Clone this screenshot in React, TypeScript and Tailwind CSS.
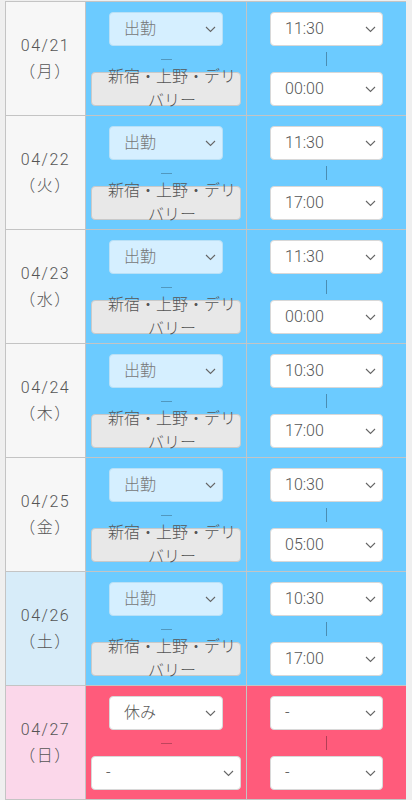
import React from 'react';

type Day = { date: string; dow: string; kind: 'week' | 'sat' | 'sun'; status: string; place: string; start: string; end: string };

const days: Day[] = [
  { date: '04/21', dow: '（月）', kind: 'week', status: '出勤', place: '新宿・上野・デリバリー', start: '11:30', end: '00:00' },
  { date: '04/22', dow: '（火）', kind: 'week', status: '出勤', place: '新宿・上野・デリバリー', start: '11:30', end: '17:00' },
  { date: '04/23', dow: '（水）', kind: 'week', status: '出勤', place: '新宿・上野・デリバリー', start: '11:30', end: '00:00' },
  { date: '04/24', dow: '（木）', kind: 'week', status: '出勤', place: '新宿・上野・デリバリー', start: '10:30', end: '17:00' },
  { date: '04/25', dow: '（金）', kind: 'week', status: '出勤', place: '新宿・上野・デリバリー', start: '10:30', end: '05:00' },
  { date: '04/26', dow: '（土）', kind: 'sat', status: '出勤', place: '新宿・上野・デリバリー', start: '10:30', end: '17:00' },
  { date: '04/27', dow: '（日）', kind: 'sun', status: '休み', place: '-', start: '-', end: '-' },
];

const Chevron = () => (
  <svg width="11" height="7" viewBox="0 0 11 7" className="shrink-0">
    <path d="M1 1 L5.5 5.5 L10 1" fill="none" stroke="#666" strokeWidth="1.1" />
  </svg>
);

const App: React.FC = () => {
  return (
    <div
      className="w-[412px] h-[800px] bg-[#efefef] pl-[5px] pr-[6px] pt-[1px] overflow-hidden font-light"
      style={{ fontFamily: 'Roboto, "Noto Sans CJK JP", sans-serif' }}
    >
      <div className="border-t border-l border-[#c4c4c4]">
        {days.map(d => {
          const off = d.kind === 'sun';
          const dateBg = d.kind === 'sat' ? 'bg-[#d7ecf9]' : d.kind === 'sun' ? 'bg-[#fbd7ea]' : 'bg-[#f7f7f7]';
          const cellBg = off ? 'bg-[#ff5b7b]' : 'bg-[#6ccbff]';
          return (
            <div key={d.date} className="flex h-[114px] border-b border-[#c4c4c4]">
              {/* date */}
              <div className={`w-[80px] shrink-0 border-r border-[#c4c4c4] flex flex-col items-center justify-center text-[16px] leading-[26px] tracking-[1.5px] text-[#555] ${dateBg}`}>
                <span>{d.date}</span>
                <span>{d.dow}</span>
              </div>

              {/* status / place */}
              <div className={`w-[161px] shrink-0 border-r border-[#c4c4c4] flex flex-col items-center pt-[10px] ${cellBg}`}>
                <div
                  className={`w-[114px] h-[34px] rounded-[4px] border flex items-center justify-between pl-[14px] pr-[6px] text-[16px] ${
                    off ? 'bg-white border-[#d8d8d8] text-[#555]' : 'bg-[#d5efff] border-[#b9e0f6] text-[#777]'
                  }`}
                >
                  <span>{d.status}</span>
                  <Chevron />
                </div>
                <div className="h-[26px] flex items-center">
                  <div className="w-[11px] h-px bg-black/25" />
                </div>
                {off ? (
                  <div className="w-[150px] h-[34px] rounded-[4px] border border-[#d8d8d8] bg-white flex items-center justify-between pl-[14px] pr-[6px] text-[16px] text-[#555]">
                    <span>{d.place}</span>
                    <Chevron />
                  </div>
                ) : (
                  <div className="w-[150px] h-[34px] rounded-[4px] border border-[#c9c9c9] bg-[#e8e8e8] flex items-center justify-center pl-[14px] pr-[2px] text-[16px] leading-[24px] text-[#555] text-center">
                    <span>{d.place}</span>
                  </div>
                )}
              </div>

              {/* times */}
              <div className={`w-[159px] shrink-0 flex flex-col items-center pt-[10px] ${cellBg}`}>
                <div className="w-[113px] h-[34px] rounded-[4px] border border-[#d8d8d8] bg-white flex items-center justify-between pl-[14px] pr-[6px] text-[16px] text-[#555]">
                  <span>{d.start}</span>
                  <Chevron />
                </div>
                <div className="h-[26px] flex items-center">
                  <div className="w-px h-[14px] bg-black/30" />
                </div>
                <div className="w-[113px] h-[34px] rounded-[4px] border border-[#d8d8d8] bg-white flex items-center justify-between pl-[14px] pr-[6px] text-[16px] text-[#555]">
                  <span>{d.end}</span>
                  <Chevron />
                </div>
              </div>
            </div>
          );
        })}
      </div>
    </div>
  );
};

export default App;
